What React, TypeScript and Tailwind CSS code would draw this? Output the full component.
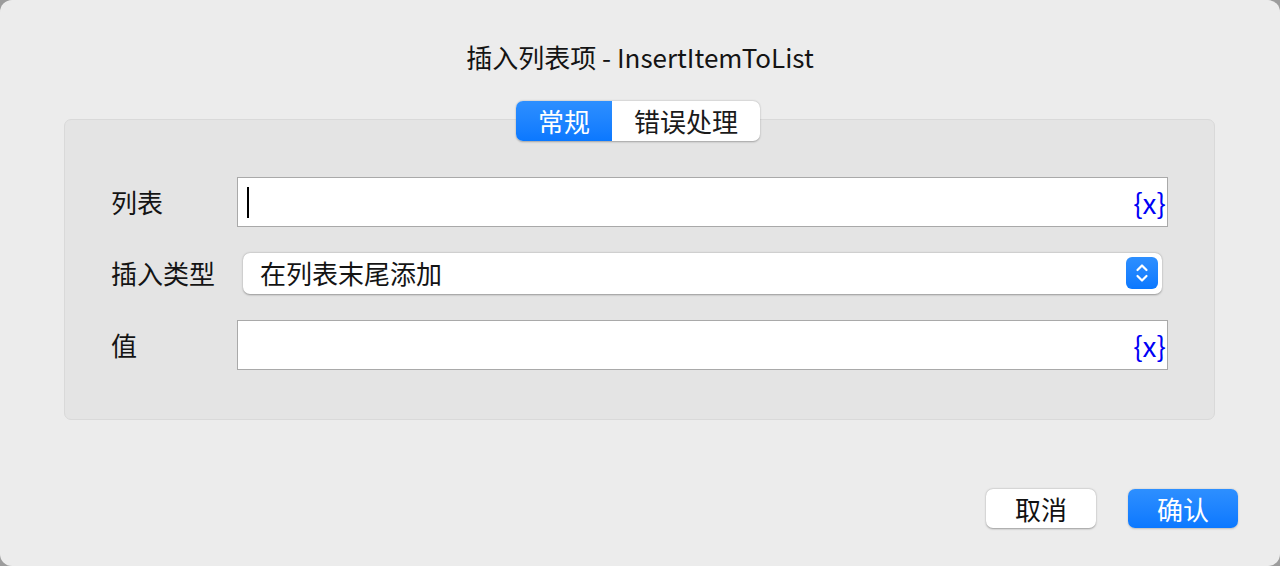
import React from 'react';

const font = { fontFamily: '"Noto Sans CJK SC", "Liberation Sans", sans-serif' };

function VarInput({ cursor }: { cursor?: boolean }) {
  return (
    <div className="flex h-[50px] flex-1 items-center border border-[#a9a9a9] bg-white pl-[9px] pr-[1px]">
      <div className="flex-1">
        {cursor && <div className="h-[31px] w-[2px] bg-black" />}
      </div>
      <span className="text-[28px] leading-none text-[#0000f5]">{'{x}'}</span>
    </div>
  );
}

function Row({ label, children }: { label: string; children: React.ReactNode }) {
  return (
    <div className="flex h-[50px] items-center">
      <div className="w-[126px] text-[26px] leading-none text-[#141414]">{label}</div>
      {children}
    </div>
  );
}

export default function App() {
  return (
    <div className="h-[566px] w-[1280px] bg-[#9c9c9c]" style={font}>
      <div className="flex h-full flex-col rounded-[12px] bg-[#ececec]">
        {/* Title */}
        <div className="mt-[43px] h-[28px] text-center text-[26px] leading-[28px] text-[#141414]">
          插入列表项 - InsertItemToList
        </div>

        {/* Tabs */}
        <div className="relative z-10 mt-[30px] flex justify-center pr-[4px]">
          <div className="flex h-[40px] overflow-hidden rounded-[7px] bg-white shadow-[0_0.5px_2px_rgba(0,0,0,0.3)]">
            <div className="flex w-[96px] items-center justify-center bg-gradient-to-b from-[#2d8fff] to-[#0a78ff] text-[26px] leading-none text-white">
              常规
            </div>
            <div className="flex w-[148px] items-center justify-center text-[26px] leading-none text-[#1a1a1a]">
              错误处理
            </div>
          </div>
        </div>

        {/* Panel */}
        <div className="ml-[64px] mr-[65px] -mt-[22px] h-[301px] rounded-[7px] border border-[#d9d9d9] bg-[#e4e4e4] pl-[46px] pr-[46px] pt-[57px]">
          <Row label="列表">
            <VarInput cursor />
          </Row>
          <div className="mt-[21px]">
            <Row label="插入类型">
              <div className="mx-[6px] flex h-[41px] flex-1 items-center rounded-[7px] bg-white pl-[17px] pr-[4px] shadow-[0_0.5px_2px_rgba(0,0,0,0.35)]">
                <span className="flex-1 text-[26px] leading-none text-[#141414]">在列表末尾添加</span>
                <div className="flex h-[32px] w-[32px] items-center justify-center rounded-[6px] bg-gradient-to-b from-[#2d8fff] to-[#0a78ff]">
                  <svg width="14" height="22" viewBox="0 0 14 22" fill="none" stroke="white" strokeWidth="2.2" strokeLinecap="round" strokeLinejoin="round">
                    <path d="M2.5 8 L7 3.5 L11.5 8" />
                    <path d="M2.5 14 L7 18.5 L11.5 14" />
                  </svg>
                </div>
              </div>
            </Row>
          </div>
          <div className="mt-[22px]">
            <Row label="值">
              <VarInput />
            </Row>
          </div>
        </div>

        {/* Buttons */}
        <div className="mt-[69px] flex justify-end gap-[32px] pr-[42px]">
          <button className="flex h-[39px] w-[110px] items-center justify-center rounded-[7px] bg-white text-[26px] leading-none text-[#111] shadow-[0_0.5px_2px_rgba(0,0,0,0.35)]">
            取消
          </button>
          <button className="flex h-[39px] w-[110px] items-center justify-center rounded-[7px] bg-gradient-to-b from-[#2d8fff] to-[#0a78ff] text-[26px] leading-none text-white shadow-[0_0.5px_2px_rgba(0,0,0,0.2)]">
            确认
          </button>
        </div>
      </div>
    </div>
  );
}
